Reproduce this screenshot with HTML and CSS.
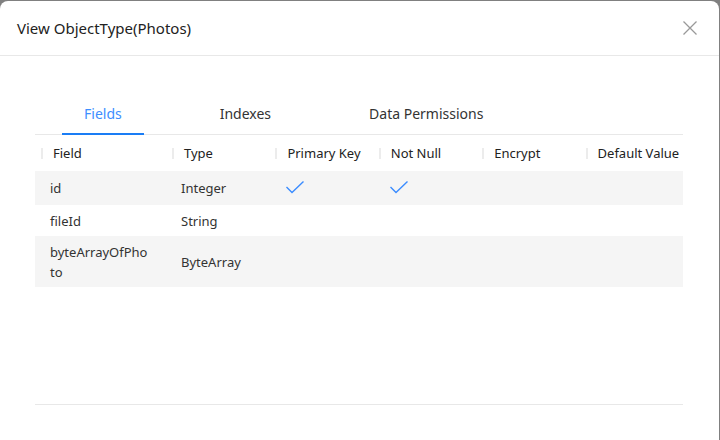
FILE: index.html
```html
<!DOCTYPE html>
<html>
<head>
<meta charset="utf-8">
<link rel="stylesheet" href="styles.css">
</head>
<body>
<div class="dialog">
  <div class="header">
    <div class="title">View ObjectType(Photos)</div>
    <svg class="close" width="14" height="14" viewBox="0 0 14 14"><path d="M0.5 0.5 L13.5 13.5 M13.5 0.5 L0.5 13.5" stroke="#999" stroke-width="1.3" fill="none"/></svg>
  </div>
  <div class="content">
    <div class="tabs">
      <div class="tab active">Fields</div>
      <div class="tab">Indexes</div>
      <div class="tab">Data Permissions</div>
    </div>
    <table class="grid">
      <colgroup>
        <col class="c1"><col class="cn"><col class="cn"><col class="cn"><col class="cn"><col class="cn">
      </colgroup>
      <thead>
        <tr>
          <th><span class="sep"></span>Field</th>
          <th><span class="sep"></span>Type</th>
          <th><span class="sep"></span>Primary Key</th>
          <th><span class="sep"></span>Not Null</th>
          <th><span class="sep"></span>Encrypt</th>
          <th><span class="sep"></span>Default Value</th>
        </tr>
      </thead>
      <tbody>
        <tr class="alt r1">
          <td>id</td>
          <td>Integer</td>
          <td><svg class="check" width="18" height="13" viewBox="0 0 18 13"><polyline points="0.5,6 6,11.5 17.5,0.5" stroke="#3b8cff" stroke-width="1.4" fill="none"/></svg></td>
          <td><svg class="check" width="18" height="13" viewBox="0 0 18 13"><polyline points="0.5,6 6,11.5 17.5,0.5" stroke="#3b8cff" stroke-width="1.4" fill="none"/></svg></td>
          <td></td>
          <td></td>
        </tr>
        <tr>
          <td>fileId</td>
          <td>String</td>
          <td></td><td></td><td></td><td></td>
        </tr>
        <tr class="alt">
          <td class="wrap">byteArrayOfPhoto</td>
          <td>ByteArray</td>
          <td></td><td></td><td></td><td></td>
        </tr>
      </tbody>
    </table>
  </div>
  <div class="footer"></div>
</div>
</body>
</html>
```
FILE: styles.css
```css
html, body {
  margin: 0;
  padding: 0;
}
body {
  background: #808080;
  width: 720px;
  height: 440px;
  overflow: hidden;
  font-family: "Noto Sans", "Liberation Sans", sans-serif;
  color: #333;
}
.dialog {
  margin-top: 1px;
  width: 719px;
  height: 448px;
  background: #fff;
  border-radius: 8px;
  display: flex;
  flex-direction: column;
}
.header {
  height: 54px;
  border-bottom: 1px solid #e8e8e8;
  display: flex;
  align-items: center;
  justify-content: space-between;
  padding: 0 22px 0 17px;
}
.title {
  font-size: 15px;
  color: #222;
  margin-top: -1px;
}
.close {
  display: block;
  margin-top: -1px;
}
.content {
  height: 348px;
  padding: 0 36px 0 35px;
  box-sizing: border-box;
  padding-top: 39px;
}
.tabs {
  display: flex;
  gap: 54px;
  padding-left: 27px;
  border-bottom: 1px solid #e8e8e8;
  height: 39px;
}
.tab {
  font-size: 14px;
  padding: 0 22px;
  line-height: 38px;
  height: 38px;
  color: #333;
  border-bottom: 2px solid transparent;
  margin-bottom: -1px;
}
.tab.active {
  color: #3d8eff;
  border-bottom-color: #1a7df5;
}
.grid {
  width: 648px;
  border-collapse: collapse;
  table-layout: fixed;
  font-size: 13px;
}
.c1 { width: 131px; }
.cn { width: 103.4px; }
.grid th {
  height: 36px;
  padding: 0 0 0 6px;
  text-align: left;
  font-weight: normal;
  color: #222;
  white-space: nowrap;
}
.sep {
  display: inline-block;
  width: 2px;
  height: 11px;
  background: #ececec;
  vertical-align: -1px;
  margin-right: 10px;
}
.grid td {
  padding: 5.5px 15px;
  line-height: 20px;
  vertical-align: middle;
  color: #333;
}
.grid tr.r1 td {
  height: 23px;
}
.grid td.wrap {
  word-break: break-all;
}
.check {
  display: block;
  margin-left: 2px;
  margin-top: -2px;
}
.alt td {
  background: #f5f5f5;
}
.footer {
  margin: 0 36px 0 35px;
  border-top: 1px solid #e8e8e8;
}
```
